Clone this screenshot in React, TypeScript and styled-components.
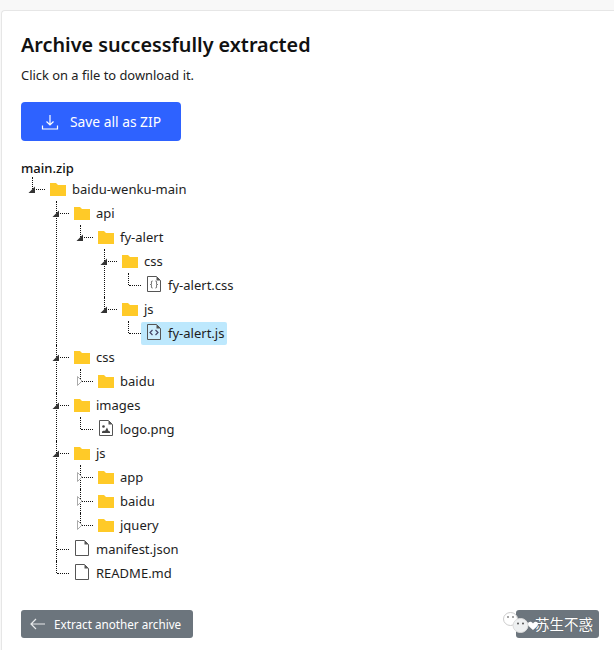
import React from "react";
import styled, { createGlobalStyle } from "styled-components";

const GlobalStyle = createGlobalStyle`
  html, body {
    margin: 0;
    padding: 0;
    background: #f8f8f8;
    overflow: hidden;
  }
  body {
    font-family: "Noto Sans", "Open Sans", sans-serif;
    color: #111;
  }
`;

const Page = styled.div`
  height: 650px;
  padding: 10px 0 0 1px;
  box-sizing: border-box;
`;

const Card = styled.main`
  height: 660px;
  box-sizing: border-box;
  background: #fff;
  border: 1px solid #e6e6e6;
  border-right: none;
  border-radius: 4px 0 0 4px;
  padding: 20px 0 0 19px;
`;

const Title = styled.h1`
  margin: 0;
  font-size: 19.8px;
  line-height: 27px;
  font-weight: 600;
  color: #111;
`;

const Hint = styled.p`
  margin: 8px 0 0;
  font-size: 12.9px;
  line-height: 18px;
  color: #222;
`;

const SaveButton = styled.button`
  display: flex;
  align-items: center;
  gap: 11px;
  width: 160px;
  height: 39px;
  margin-top: 18px;
  padding: 0 0 0 20px;
  border: none;
  border-radius: 4px;
  background: #2e62ff;
  color: #fff;
  font: 13.8px "Noto Sans", sans-serif;
`;

const Tree = styled.section`
  margin-top: 18px;
`;

const RootName = styled.div`
  font-size: 13px;
  line-height: 18px;
  font-weight: 500;
  color: #111;
`;

const Branch = styled.ul<{ $root?: boolean }>`
  list-style: none;
  margin: 0;
  padding: 0 0 0 ${(p) => (p.$root ? 3 : 24)}px;
`;

const Node = styled.li<{ $last: boolean }>`
  position: relative;

  &::before {
    content: "";
    position: absolute;
    left: 8px;
    top: 0;
    bottom: ${(p) => (p.$last ? "auto" : "0")};
    height: ${(p) => (p.$last ? "12px" : "auto")};
    border-left: 1px dotted #111;
  }
`;

const Row = styled.div`
  position: relative;
  display: flex;
  align-items: center;
  height: 24px;
  padding-left: 26px;

  &::before {
    content: "";
    position: absolute;
    left: 9px;
    width: 12px;
    top: 12px;
    border-top: 1px dotted #111;
  }
`;

const Toggle = styled.svg`
  position: absolute;
  left: 4px;
  top: 7px;
`;

const IconSlot = styled.span`
  display: flex;
  justify-content: center;
  width: 16px;
`;

const FileGlyph = styled.svg`
  margin-bottom: 2px;
`;

const Label = styled.span`
  margin-left: 6px;
  font-size: 13px;
  color: #1d1d1d;
`;

const SelectedFile = styled.span`
  display: flex;
  align-items: center;
  height: 23px;
  margin-left: -5px;
  padding: 0 3px 0 6px;
  border-radius: 2px;
  background: #bde8fd;
  font-size: 13px;
  color: #1d1d1d;
`;

const SelectedLabel = styled.span`
  margin-left: 7px;
`;

const Footer = styled.footer`
  display: flex;
  justify-content: space-between;
  width: 578px;
  margin-top: 25px;
`;

const BackButton = styled.button`
  display: flex;
  align-items: center;
  gap: 8px;
  width: 172px;
  height: 28px;
  padding: 0 0 0 9px;
  border: none;
  border-radius: 3px;
  background: #6c757d;
  color: #fff;
  font: 11.7px "Noto Sans", sans-serif;
`;

const MarkedButton = styled.div`
  position: relative;
  display: flex;
  align-items: center;
  width: 83px;
  height: 28px;
  padding: 0 0 2px 19px;
  box-sizing: border-box;
  border-radius: 3px;
  background: #6c757d;
  color: #fff;
  font: 14.5px "Noto Sans CJK SC", sans-serif;
  text-shadow: 0 0 1px #555;
`;

const Mark = styled.svg`
  position: absolute;
  left: -13px;
  top: 1px;
`;

type Item = {
  name: string;
  kind: "folder" | "css" | "js" | "image" | "file";
  open?: boolean;
  selected?: boolean;
  children?: Item[];
};

const tree: Item[] = [
  {
    name: "baidu-wenku-main",
    kind: "folder",
    open: true,
    children: [
      {
        name: "api",
        kind: "folder",
        open: true,
        children: [
          {
            name: "fy-alert",
            kind: "folder",
            open: true,
            children: [
              {
                name: "css",
                kind: "folder",
                open: true,
                children: [{ name: "fy-alert.css", kind: "css" }],
              },
              {
                name: "js",
                kind: "folder",
                open: true,
                children: [{ name: "fy-alert.js", kind: "js", selected: true }],
              },
            ],
          },
        ],
      },
      {
        name: "css",
        kind: "folder",
        open: true,
        children: [{ name: "baidu", kind: "folder" }],
      },
      {
        name: "images",
        kind: "folder",
        open: true,
        children: [{ name: "logo.png", kind: "image" }],
      },
      {
        name: "js",
        kind: "folder",
        open: true,
        children: [
          { name: "app", kind: "folder" },
          { name: "baidu", kind: "folder" },
          { name: "jquery", kind: "folder" },
        ],
      },
      { name: "manifest.json", kind: "file" },
      { name: "README.md", kind: "file" },
    ],
  },
];

function FolderIcon() {
  return (
    <svg width="16" height="14" viewBox="0 0 16 14">
      <path d="M0 1h6l2 2h8v11H0z" fill="#ffca28" />
    </svg>
  );
}

function FileIcon({ kind }: { kind: Item["kind"] }) {
  return (
    <FileGlyph width="14" height="16" viewBox="0 0 14 16" fill="none">
      <path d="M.5.5h9l4 4v11H.5z" fill={kind === "js" ? "#cdeefe" : "#fff"} stroke="#555" />
      <path d="M9.500.5v4h4z" fill="#555" />
      {kind === "css" && (
        <path
          d="M5.500 5C4 5 4.500 6.500 4.500 7.500S4 8.500 3.500 8.500c.5 0 1 0 1 1s-.5 2.500 1 2.500M8.500 5c1.500 0 1 1.500 1 2.500s.5 1 1 1c-.5 0-1 0-1 1s.5 2.500-1 2.500"
          stroke="#555"
        />
      )}
      {kind === "js" && (
        <path d="M5.500 6 3 8.500 5.500 11M8.500 6 11 8.500 8.500 11" stroke="#446" strokeWidth="1.200" />
      )}
      {kind === "image" && (
        <>
          <circle cx="4.500" cy="6.500" r="1.300" fill="#444" />
          <path d="M3 13v-1.500l2-1 1 .5 2-3.500 1.500 3.500 1.500 .5V13z" fill="#444" />
        </>
      )}
    </FileGlyph>
  );
}

function TreeToggle({ open }: { open: boolean }) {
  return (
    <Toggle width="8" height="10" viewBox="0 0 8 10">
      {open ? (
        <path d="M7 2.500V9H.5z" fill="#333" />
      ) : (
        <path d="M1.500 .5 6 5 1.500 9.500z" fill="#fff" stroke="#aaa" />
      )}
    </Toggle>
  );
}

function TreeNode({ item, last }: { item: Item; last: boolean }) {
  const isFolder = item.kind === "folder";
  return (
    <Node $last={last}>
      <Row>
        {isFolder && <TreeToggle open={!!item.open} />}
        {item.selected ? (
          <SelectedFile>
            <FileIcon kind={item.kind} />
            <SelectedLabel>{item.name}</SelectedLabel>
          </SelectedFile>
        ) : (
          <>
            <IconSlot>{isFolder ? <FolderIcon /> : <FileIcon kind={item.kind} />}</IconSlot>
            <Label>{item.name}</Label>
          </>
        )}
      </Row>
      {item.children && (
        <Branch>
          {item.children.map((child, i) => (
            <TreeNode key={child.name} item={child} last={i === item.children!.length - 1} />
          ))}
        </Branch>
      )}
    </Node>
  );
}

export default function App() {
  return (
    <Page>
      <GlobalStyle />
      <Card>
        <Title>Archive successfully extracted</Title>
        <Hint>Click on a file to download it.</Hint>
        <SaveButton>
          <svg width="18" height="18" viewBox="0 0 18 18" fill="none" stroke="#fff" strokeWidth="1.200">
            <path d="M9 2v10M5.500 8.500 9 12l3.500-3.500M1.500 12.500v3.500h15v-3.500" />
          </svg>
          Save all as ZIP
        </SaveButton>
        <Tree>
          <RootName>main.zip</RootName>
          <Branch $root>
            {tree.map((item) => (
              <TreeNode key={item.name} item={item} last />
            ))}
          </Branch>
        </Tree>
        <Footer>
          <BackButton>
            <svg width="16" height="12" viewBox="0 0 16 12" fill="none" stroke="#e8eaec" strokeWidth="1.200">
              <path d="M15 6H1M6 1 1 6l5 5" />
            </svg>
            Extract another archive
          </BackButton>
          <MarkedButton>
            <Mark width="36" height="26" viewBox="0 0 36 26">
              <ellipse cx="7.500" cy="8" rx="7" ry="6.500" fill="#fff" stroke="#ccc" />
              <ellipse cx="17.500" cy="14.500" rx="7.500" ry="7" fill="#eef0f1" stroke="#ddd" />
              <circle cx="5" cy="6" r="1" fill="#888" />
              <circle cx="10" cy="6" r="1" fill="#888" />
              <circle cx="15" cy="12.500" r="1" fill="#555" />
              <circle cx="20" cy="12.500" r="1" fill="#555" />
              <path d="M30 19c-3-2.500-5-4-5-6 0-2.500 3.500-3 5-.5 1.500-2.500 5-2 5 .5 0 2-2 3.500-5 6z" fill="#fff" />
            </Mark>
            苏生不惑
          </MarkedButton>
        </Footer>
      </Card>
    </Page>
  );
}
